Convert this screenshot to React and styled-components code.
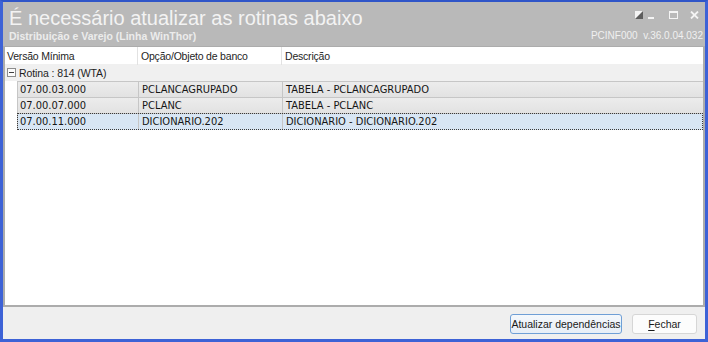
import styled, { createGlobalStyle } from 'styled-components'

const GlobalStyle = createGlobalStyle`
  html, body { margin: 0; padding: 0; background: #ffffff; }
  body { font-family: "Liberation Sans", Arial, sans-serif; }
`

const columns = ['Versão Mínima', 'Opção/Objeto de banco', 'Descrição']

const rows = [
    { versao: '07.00.03.000', objeto: 'PCLANCAGRUPADO', descricao: 'TABELA - PCLANCAGRUPADO' },
    { versao: '07.00.07.000', objeto: 'PCLANC', descricao: 'TABELA - PCLANC' },
    { versao: '07.00.11.000', objeto: 'DICIONARIO.202', descricao: 'DICIONARIO - DICIONARIO.202', selected: true },
]

export default function App() {
    return <>
        <GlobalStyle />
        <Window>
            <TitleBar>
                <TitleBlock>
                    <Title>É necessário atualizar as rotinas abaixo</Title>
                    <Subtitle>Distribuição e Varejo (Linha WinThor)</Subtitle>
                </TitleBlock>
                <SideBlock>
                    <Controls>
                        <ControlIcon width='8' height='8' viewBox='0 0 8 8'>
                            <rect x='0' y='0' width='8' height='8' fill='#f4f4f4' />
                            <polygon points='8,0 8,8 0,8' fill='#5e5e5e' />
                        </ControlIcon>
                        <ControlIcon $gap={5} width='6' height='8' viewBox='0 0 6 8'>
                            <rect x='0' y='6' width='6' height='2' fill='#f4f4f4' />
                        </ControlIcon>
                        <ControlIcon $gap={15} width='9' height='8' viewBox='0 0 9 8'>
                            <rect x='0.5' y='0.5' width='8' height='7' fill='none' stroke='#f4f4f4' />
                            <rect x='0' y='0' width='9' height='2' fill='#f4f4f4' />
                        </ControlIcon>
                        <ControlIcon $gap={12} width='9' height='8' viewBox='0 0 9 8'>
                            <path d='M1 0.5 L8 7.5 M8 0.5 L1 7.5' stroke='#f4f4f4' strokeWidth='1.8' />
                        </ControlIcon>
                    </Controls>
                    <Version>PCINF000&nbsp; v.36.0.04.032</Version>
                </SideBlock>
            </TitleBar>

            <Grid>
                <HeaderRow>
                    {columns.map((label, i) => <HeadCell key={label} $first={i === 0}>{label}</HeadCell>)}
                </HeaderRow>
                <GroupRow>
                    <Toggle />
                    <GroupLabel>Rotina : 814 (WTA)</GroupLabel>
                </GroupRow>
                {rows.map(row => (
                    <DataRow key={row.versao} $selected={row.selected}>
                        <Cell $first>{row.versao}</Cell>
                        <Cell>{row.objeto}</Cell>
                        <Cell>{row.descricao}</Cell>
                    </DataRow>
                ))}
            </Grid>

            <Footer>
                <Button $primary $width={112}>Atualizar dependências</Button>
                <Button $width={65}><u>F</u>echar</Button>
            </Footer>
        </Window>
    </>
}

const Window = styled.div`
    width: 708px;
    height: 342px;
    box-sizing: border-box;
    border: 3px solid #3d62d6;
    border-top: 2px solid #2f55c8;
    display: flex;
    flex-direction: column;
    background: #efefef;
    overflow: hidden;
`

const TitleBar = styled.div`
    height: 44px;
    flex: none;
    box-sizing: border-box;
    background: #b9b9b9;
    display: flex;
    justify-content: space-between;
    padding: 6px 2px 0 6px;
`

const TitleBlock = styled.div`
    display: flex;
    flex-direction: column;
`

const Title = styled.div`
    font-size: 20px;
    line-height: 20px;
    color: #f3f3f3;
    white-space: nowrap;
`

const Subtitle = styled.div`
    margin-top: 2px;
    font-size: 10.5px;
    line-height: 12px;
    font-weight: bold;
    color: #ececec;
    white-space: nowrap;
`

const SideBlock = styled.div`
    display: flex;
    flex-direction: column;
    align-items: flex-end;
`

const Controls = styled.div`
    display: flex;
    align-items: flex-start;
    margin-top: 3px;
    margin-right: 4px;
    height: 8px;
`

const ControlIcon = styled.svg`
    display: block;
    flex: none;
    margin-left: ${p => p.$gap || 0}px;
`

const Version = styled.div`
    margin-top: 11px;
    font-size: 10px;
    line-height: 12px;
    color: #f0f0f0;
    white-space: nowrap;
`

const Grid = styled.div`
    flex: 1;
    min-height: 0;
    background: #ffffff;
    border: 2px solid #acacac;
    border-top-width: 1px;
`

const HeaderRow = styled.div`
    display: grid;
    grid-template-columns: 132px 144px 1fr;
    height: 17px;
`

const HeadCell = styled.div`
    font-size: 10.5px;
    letter-spacing: -0.2px;
    line-height: 17px;
    padding-top: 1px;
    color: #1e1e1e;
    padding-left: ${p => p.$first ? 2 : 3}px;
    border-left: ${p => p.$first ? 'none' : '1px solid #e2e2e2'};
    white-space: nowrap;
`

const GroupRow = styled.div`
    display: flex;
    align-items: center;
    height: 17px;
    box-sizing: border-box;
    padding-left: 2px;
    background: #f0f0f0;
`

const Toggle = styled.span`
    position: relative;
    width: 9px;
    height: 9px;
    box-sizing: border-box;
    border: 1px solid #8c8c8c;
    background: #fbfbfb;
    flex: none;

    &::after {
        content: '';
        position: absolute;
        left: 1px;
        right: 1px;
        top: 3px;
        height: 1px;
        background: #404040;
    }
`

const GroupLabel = styled.span`
    margin-left: 3px;
    font-size: 10.5px;
    letter-spacing: -0.1px;
    color: #1e1e1e;
    white-space: nowrap;
`

const DataRow = styled.div`
    display: grid;
    grid-template-columns: 120px 144px 1fr;
    margin-left: 12px;
    height: ${p => p.$selected ? 17 : 16}px;
    box-sizing: border-box;
    border-top: 1px solid #c6c6c6;
    border-left: 1px solid #c6c6c6;
    background: ${p => p.$selected ? '#d8e6f4' : 'linear-gradient(#ececec, #e2e2e2)'};
    outline: ${p => p.$selected ? '1px dotted #3a3a3a' : 'none'};
    outline-offset: -1px;
`

const Cell = styled.div`
    font-family: "DejaVu Sans Condensed", "DejaVu Sans", sans-serif;
    font-stretch: condensed;
    font-size: 11px;
    line-height: 15px;
    color: #161616;
    padding-left: ${p => p.$first ? 2 : 3}px;
    border-left: ${p => p.$first ? 'none' : '1px solid #c6c6c6'};
    white-space: nowrap;
    overflow: hidden;
`

const Footer = styled.div`
    height: 32px;
    flex: none;
    box-sizing: border-box;
    display: flex;
    justify-content: flex-end;
    align-items: flex-start;
    gap: 10px;
    padding: 7px 8px 0 0;
    background: #efefef;
`

const Button = styled.div`
    width: ${p => p.$width}px;
    height: 20px;
    box-sizing: border-box;
    display: flex;
    align-items: center;
    justify-content: center;
    border-radius: 3px;
    border: 1px solid ${p => p.$primary ? '#6f9fd6' : '#d6d6d6'};
    background: ${p => p.$primary ? 'linear-gradient(#f5f8fc, #e7eef7)' : '#fcfcfc'};
    font-size: 10.5px;
    color: #1a1a1a;
    white-space: nowrap;

    u { text-decoration-thickness: 1px; text-underline-offset: 2px; }
`
